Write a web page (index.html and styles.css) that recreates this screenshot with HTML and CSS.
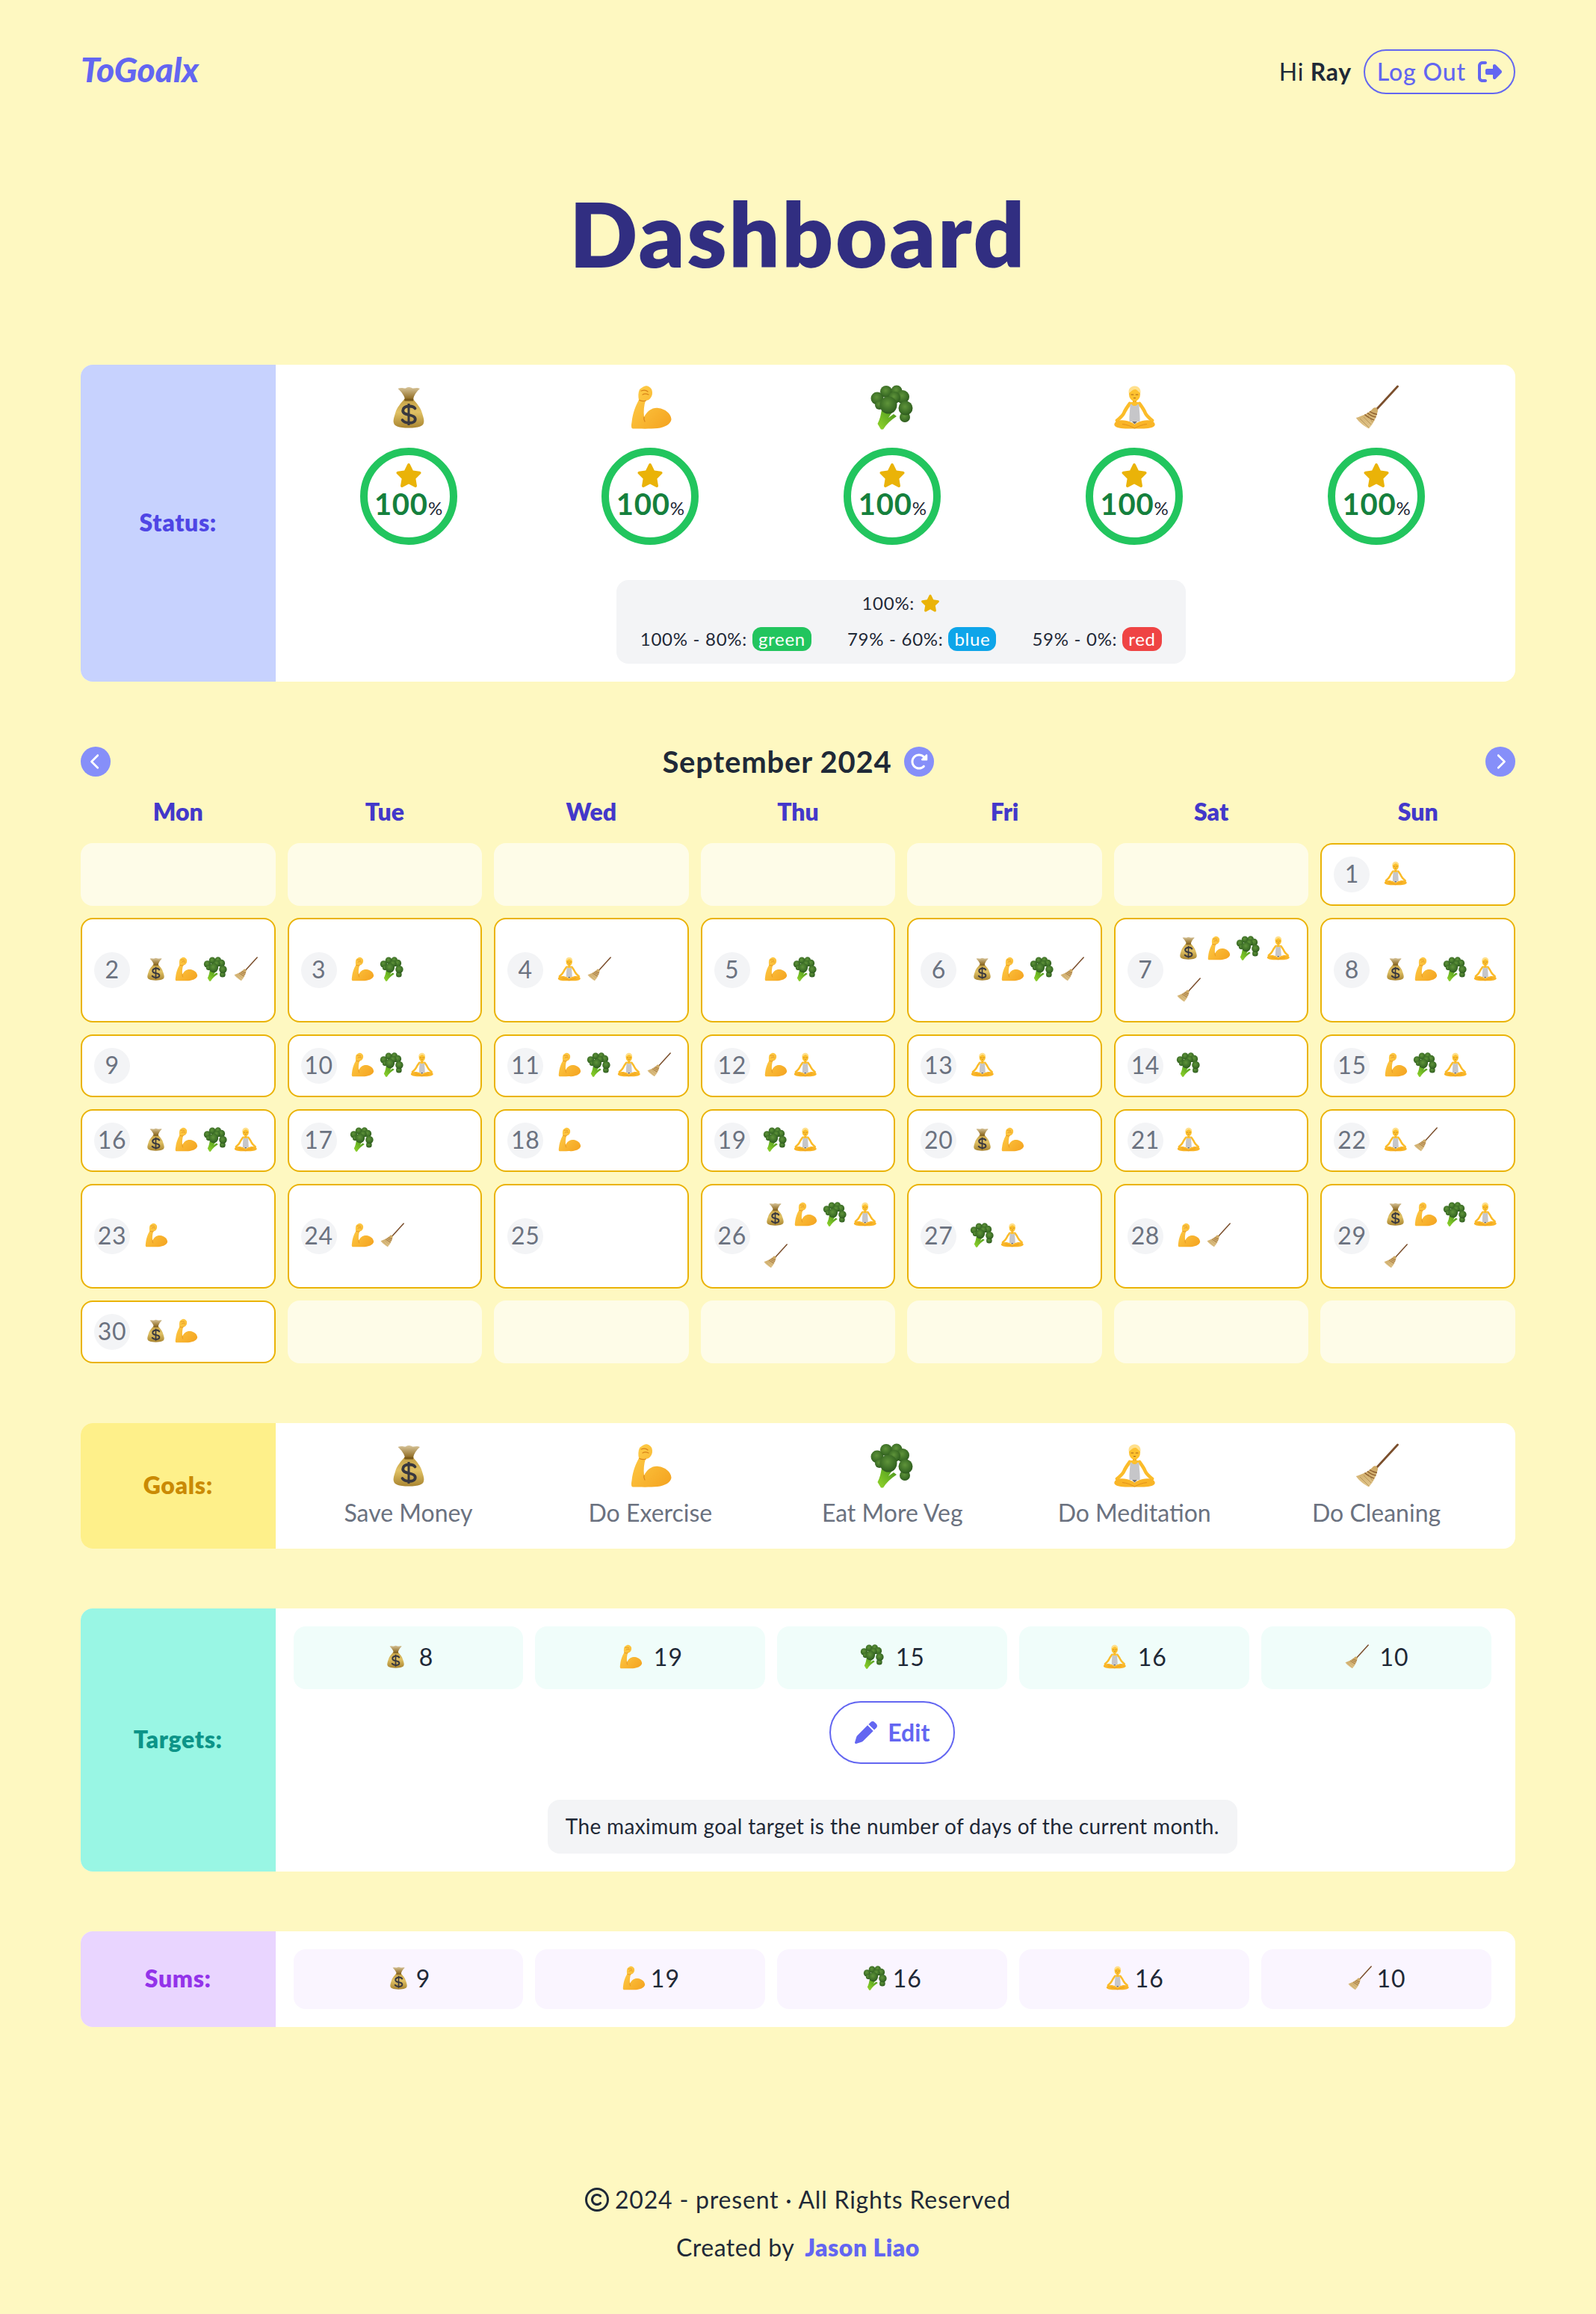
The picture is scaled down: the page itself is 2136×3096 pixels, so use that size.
FILE: index.html
```html
<!DOCTYPE html>
<html lang="en">
<head>
<meta charset="utf-8">
<title>ToGoalx Dashboard</title>
<link rel="stylesheet" href="styles.css">
</head>
<body>
<svg class="defs" width="0" height="0" aria-hidden="true">
  <defs>
    <linearGradient id="gBag" x1="0" y1="0" x2="0" y2="1"><stop offset="0" stop-color="#c39f45"/><stop offset=".45" stop-color="#e0c164"/><stop offset="1" stop-color="#a98531"/></linearGradient>
    <linearGradient id="gTop" x1="0" y1="0" x2="0" y2="1"><stop offset="0" stop-color="#d8c59a"/><stop offset="1" stop-color="#8f6b22"/></linearGradient>
    <linearGradient id="gArm" x1="0" y1="0" x2="1" y2="1"><stop offset="0" stop-color="#ffd04a"/><stop offset="1" stop-color="#f4a21f"/></linearGradient>
    <radialGradient id="gFl" cx=".45" cy=".4" r=".65"><stop offset="0" stop-color="#5f943a"/><stop offset=".7" stop-color="#3a6c25"/><stop offset="1" stop-color="#28521a"/></radialGradient>
    <linearGradient id="gStem" x1="0" y1="1" x2="1" y2="0"><stop offset="0" stop-color="#93d62c"/><stop offset="1" stop-color="#47941c"/></linearGradient>
    <linearGradient id="gBroom" x1="0" y1="0" x2="0" y2="1"><stop offset="0" stop-color="#cba661"/><stop offset="1" stop-color="#e2c68c"/></linearGradient>
    <symbol id="e-money" viewBox="0 0 60 60">
      <path d="M24 19C20 24 14 30 12 38 10 44 9 48 10 51 11 55 16 57.500 30 57.500S49 55 50 51C51 48 50 44 48 38 46 30 40 24 36 19Z" fill="url(#gBag)"/>
      <path d="M25 19C24 14 20 9 15.500 5 20 3 24 5 26 4.500 28 2.500 32 2.500 35 4.500 38 5 41 3 45 5 40 9 37 14 36 19Z" fill="url(#gTop)"/>
      <path d="M24 18.500H36.500L36 21.500H24.500Z" fill="#7a5a1c"/>
      <path d="M38.500 31.500C36 27.500 24 27 22.500 33 21 38 26 39 30 40 35 41 40 42.500 38.500 47.500 36.500 52 25 52 21.500 47" fill="none" stroke="#39383f" stroke-width="3.800" stroke-linecap="round"/>
      <path d="M30 25V54" stroke="#39383f" stroke-width="3"/>
    </symbol>
    <symbol id="e-muscle" viewBox="0 0 60 60">
      <path d="M22 2C26 0 31 3 32.500 7 33.500 11 33 14 31 17 29 20 26 21 24 21 22 27 21 35 22 43 26 35 33 30 41 31 50 32 58 38 58.500 46 58 52 50 57 40 58 30 59 16 58.500 7 58.500 5 58.500 4.500 55 5.500 50 7 36 11 28 15 20 14 16 14 10 16 6 18 4 20 3 22 2Z" fill="url(#gArm)"/>
      <path d="M16 20.500C19 22 22 22 24.500 21M22 43C21.500 45 22 47 23 49M18 8C21 7 25 7 27 9M20 13C23 11 26 12 28 13" fill="none" stroke="#d9841a" stroke-width="1.200" stroke-linecap="round"/>
    </symbol>
    <symbol id="e-broccoli" viewBox="0 0 60 60">
      <path d="M15 59.500L10.500 52C13.500 46 15 40 16 33L31 35 25 44 32 39 36 42C28 47 22 53 18 59.500Z" fill="url(#gStem)"/>
      <circle cx="47" cy="43" r="7" fill="url(#gFl)"/><circle cx="10" cy="18" r="8.500" fill="url(#gFl)"/>
      <circle cx="22" cy="9" r="8" fill="url(#gFl)"/><circle cx="36" cy="8" r="7.500" fill="url(#gFl)"/>
      <circle cx="13" cy="27" r="6" fill="url(#gFl)"/><circle cx="44" cy="16" r="9" fill="url(#gFl)"/>
      <circle cx="48" cy="31" r="9.500" fill="url(#gFl)"/><circle cx="33" cy="17" r="8" fill="url(#gFl)"/>
      <circle cx="25" cy="27" r="11.500" fill="url(#gFl)"/>
    </symbol>
    <symbol id="e-person" viewBox="0 0 60 60">
      <path d="M24 25C21 29 18 33 16 38 14 42 10 45 7 47.500M37 25C40 29 43 33 45 38 47 42 51 45 54 47.500" fill="none" stroke="#fbbc2a" stroke-width="4.600" stroke-linecap="round"/>
      <path d="M28 19H33V24H28Z" fill="#f2a91f"/>
      <path d="M24 23.500C26 22.500 35 22.500 37 23.500V28H24Z" fill="#fdc02e"/>
      <path d="M24.500 27C25 25.500 26.500 25.500 26.800 26 27.800 28.800 33.200 28.800 34.200 26 34.500 25.500 36 25.500 36.500 27 36.500 33 38 41 37.500 49H23.500C23 41 24.500 33 24.500 27Z" fill="#c6c6c9"/>
      <ellipse cx="30.500" cy="12" rx="7.600" ry="10" fill="#fdc22f"/>
      <path d="M22.700 11C21.500 4 27 1.500 30.500 1.500S39.500 4 38.300 11C35 9 34 6 31 6 28 6 26 9 22.700 11Z" fill="#ffe08c"/>
      <path d="M26 13H28.800M32.200 13H35M29.500 17.500H31.500" stroke="#a8621a" stroke-width="1" stroke-linecap="round"/>
      <path d="M3.500 52C5 47.500 13 46.500 20 48 25 49 29 51 30.500 53 32 51 36 49 41 48 48 46.500 56 47.500 57.500 52 59 56 52 58.500 43 58.500H18C9 58.500 2 56 3.500 52Z" fill="#f9b527"/>
      <path d="M14 52.500C20 53 26 55.500 30.500 58M47 52.500C41 53 35 55.500 30.500 58" fill="none" stroke="#e2901a" stroke-width="1"/>
      <path d="M27 49H34L30.500 52.500Z" fill="#6f6f75"/>
    </symbol>
    <symbol id="e-broom" viewBox="0 0 60 60">
      <path d="M58.500 2 30 33" stroke="#7b4f2d" stroke-width="2.800" stroke-linecap="round"/>
      <path d="M26 31C29 29 32 31 32 35 30 44 26 52 20 58.500 14 55.500 7 50 2.800 44 10 42 20 38 26 31Z" fill="url(#gBroom)"/>
      <path d="M18 37.500C21 40 25 42.500 29.500 43M14.500 39.500C18 43 22 45 27 47M21 35.500C24 37.500 27 38.800 31 39.500" fill="none" stroke="#8c5d2e" stroke-width="1.300"/>
      <path d="M8 45 20 57M13 43 23 53M19 41 25 50" fill="none" stroke="#b08e52" stroke-width=".8"/>
    </symbol>
    <symbol id="i-star" viewBox="0 0 576 512"><path d="M316.900 18C311.600 7 300.400 0 288.100 0s-23.400 7-28.800 18L195 150.300 51.400 171.500c-12 1.800-22 10.200-25.700 21.700s-.7 24.200 7.900 32.700L137.800 329 113.200 474.700c-2 12 3 24.200 12.900 31.300s23 8 33.800 2.300l128.300-68.500 128.300 68.500c10.800 5.700 23.900 4.900 33.800-2.300s14.900-19.300 12.900-31.300L438.500 329 542.700 225.900c8.600-8.500 11.700-21.200 7.900-32.700s-13.700-19.900-25.700-21.700L381.200 150.300 316.900 18z"/></symbol>
  </defs>
</svg>

<header class="topbar">
  <a class="logo">ToGoalx</a>
  <div class="user">
    <span class="greet">Hi <strong>Ray</strong></span>
    <button class="btn-outline logout">Log Out
      <svg class="ico-logout" viewBox="0 0 512 512"><path d="M377.900 105.900L500.700 228.700c7.200 7.200 11.300 17.100 11.300 27.300s-4.100 20.100-11.300 27.300L377.900 406.100c-6.400 6.400-15 9.900-24 9.900c-18.700 0-33.900-15.200-33.900-33.900l0-62.100-128 0c-17.700 0-32-14.300-32-32l0-64c0-17.700 14.300-32 32-32l128 0 0-62.100c0-18.700 15.200-33.900 33.900-33.900c9 0 17.600 3.600 24 9.900zM160 96L96 96c-17.700 0-32 14.300-32 32l0 256c0 17.700 14.300 32 32 32l64 0c17.700 0 32 14.300 32 32s-14.300 32-32 32l-64 0c-53 0-96-43-96-96L0 128C0 75 43 32 96 32l64 0c17.700 0 32 14.300 32 32s-14.300 32-32 32z"/></svg>
    </button>
  </div>
</header>

<h1 class="title">Dashboard</h1>

<section class="card">
  <div class="card-label label-status">Status:</div>
  <div class="card-body status-body">
    <div class="five">
      <div class="status-item"><svg class="emo-lg"><use href="#e-money"/></svg><div class="ring"><svg class="ring-star"><use href="#i-star"/></svg><div class="ring-val">100<small>%</small></div></div></div>
      <div class="status-item"><svg class="emo-lg"><use href="#e-muscle"/></svg><div class="ring"><svg class="ring-star"><use href="#i-star"/></svg><div class="ring-val">100<small>%</small></div></div></div>
      <div class="status-item"><svg class="emo-lg"><use href="#e-broccoli"/></svg><div class="ring"><svg class="ring-star"><use href="#i-star"/></svg><div class="ring-val">100<small>%</small></div></div></div>
      <div class="status-item"><svg class="emo-lg"><use href="#e-person"/></svg><div class="ring"><svg class="ring-star"><use href="#i-star"/></svg><div class="ring-val">100<small>%</small></div></div></div>
      <div class="status-item"><svg class="emo-lg"><use href="#e-broom"/></svg><div class="ring"><svg class="ring-star"><use href="#i-star"/></svg><div class="ring-val">100<small>%</small></div></div></div>
    </div>
    <div class="legend-wrap">
      <div class="legend">
        <div class="legend-top">100%: <svg class="legend-star"><use href="#i-star"/></svg></div>
        <div class="legend-row">
          <span>100% - 80%: <b class="tag tag-green">green</b></span>
          <span>79% - 60%: <b class="tag tag-blue">blue</b></span>
          <span>59% - 0%: <b class="tag tag-red">red</b></span>
        </div>
      </div>
    </div>
  </div>
</section>

<section class="calendar">
  <div class="cal-head">
    <button class="round"><svg class="chev" viewBox="0 0 320 512"><path d="M9.400 233.400c-12.500 12.500-12.500 32.800 0 45.300l192 192c12.500 12.500 32.800 12.500 45.300 0s12.500-32.800 0-45.300L77.300 256 246.600 86.600c12.500-12.500 12.500-32.800 0-45.300s-32.800-12.500-45.300 0l-192 192z"/></svg></button>
    <div class="cal-title"><span>September 2024</span><button class="round"><svg class="rot" viewBox="0 0 512 512"><path d="M463.500 224H472c13.300 0 24-10.700 24-24V72c0-9.700-5.800-18.500-14.800-22.200s-19.300-1.700-26.200 5.200L413.400 96.600c-87.600-86.500-228.700-86.200-315.800 1c-87.500 87.500-87.500 229.300 0 316.800s229.300 87.500 316.800 0c12.500-12.500 12.500-32.800 0-45.300s-32.800-12.500-45.300 0c-62.500 62.500-163.800 62.500-226.300 0s-62.500-163.800 0-226.300c62.200-62.200 162.700-62.500 225.300-1L327 183c-6.900 6.900-8.900 17.200-5.200 26.200s12.500 14.800 22.200 14.800H463.500z"/></svg></button></div>
    <button class="round"><svg class="chev" viewBox="0 0 320 512"><path d="M310.600 233.400c12.500 12.500 12.500 32.800 0 45.300l-192 192c-12.500 12.500-32.800 12.500-45.300 0s-12.500-32.800 0-45.300L242.700 256 73.400 86.600c-12.500-12.500-12.500-32.800 0-45.300s32.800-12.500 45.300 0l192 192z"/></svg></button>
  </div>
  <div class="weekdays"><div>Mon</div><div>Tue</div><div>Wed</div><div>Thu</div><div>Fri</div><div>Sat</div><div>Sun</div></div>
  <div class="month">
    <div class="empty"></div><div class="empty"></div><div class="empty"></div><div class="empty"></div><div class="empty"></div><div class="empty"></div>
    <div class="day"><span class="num">1</span><div class="emos"><svg class="emo"><use href="#e-person"/></svg></div></div>
    <div class="day"><span class="num">2</span><div class="emos"><svg class="emo"><use href="#e-money"/></svg><svg class="emo"><use href="#e-muscle"/></svg><svg class="emo"><use href="#e-broccoli"/></svg><svg class="emo"><use href="#e-broom"/></svg></div></div>
    <div class="day"><span class="num">3</span><div class="emos"><svg class="emo"><use href="#e-muscle"/></svg><svg class="emo"><use href="#e-broccoli"/></svg></div></div>
    <div class="day"><span class="num">4</span><div class="emos"><svg class="emo"><use href="#e-person"/></svg><svg class="emo"><use href="#e-broom"/></svg></div></div>
    <div class="day"><span class="num">5</span><div class="emos"><svg class="emo"><use href="#e-muscle"/></svg><svg class="emo"><use href="#e-broccoli"/></svg></div></div>
    <div class="day"><span class="num">6</span><div class="emos"><svg class="emo"><use href="#e-money"/></svg><svg class="emo"><use href="#e-muscle"/></svg><svg class="emo"><use href="#e-broccoli"/></svg><svg class="emo"><use href="#e-broom"/></svg></div></div>
    <div class="day"><span class="num">7</span><div class="emos"><svg class="emo"><use href="#e-money"/></svg><svg class="emo"><use href="#e-muscle"/></svg><svg class="emo"><use href="#e-broccoli"/></svg><svg class="emo"><use href="#e-person"/></svg><svg class="emo"><use href="#e-broom"/></svg></div></div>
    <div class="day"><span class="num">8</span><div class="emos"><svg class="emo"><use href="#e-money"/></svg><svg class="emo"><use href="#e-muscle"/></svg><svg class="emo"><use href="#e-broccoli"/></svg><svg class="emo"><use href="#e-person"/></svg></div></div>
    <div class="day"><span class="num">9</span><div class="emos"></div></div>
    <div class="day"><span class="num">10</span><div class="emos"><svg class="emo"><use href="#e-muscle"/></svg><svg class="emo"><use href="#e-broccoli"/></svg><svg class="emo"><use href="#e-person"/></svg></div></div>
    <div class="day"><span class="num">11</span><div class="emos"><svg class="emo"><use href="#e-muscle"/></svg><svg class="emo"><use href="#e-broccoli"/></svg><svg class="emo"><use href="#e-person"/></svg><svg class="emo"><use href="#e-broom"/></svg></div></div>
    <div class="day"><span class="num">12</span><div class="emos"><svg class="emo"><use href="#e-muscle"/></svg><svg class="emo"><use href="#e-person"/></svg></div></div>
    <div class="day"><span class="num">13</span><div class="emos"><svg class="emo"><use href="#e-person"/></svg></div></div>
    <div class="day"><span class="num">14</span><div class="emos"><svg class="emo"><use href="#e-broccoli"/></svg></div></div>
    <div class="day"><span class="num">15</span><div class="emos"><svg class="emo"><use href="#e-muscle"/></svg><svg class="emo"><use href="#e-broccoli"/></svg><svg class="emo"><use href="#e-person"/></svg></div></div>
    <div class="day"><span class="num">16</span><div class="emos"><svg class="emo"><use href="#e-money"/></svg><svg class="emo"><use href="#e-muscle"/></svg><svg class="emo"><use href="#e-broccoli"/></svg><svg class="emo"><use href="#e-person"/></svg></div></div>
    <div class="day"><span class="num">17</span><div class="emos"><svg class="emo"><use href="#e-broccoli"/></svg></div></div>
    <div class="day"><span class="num">18</span><div class="emos"><svg class="emo"><use href="#e-muscle"/></svg></div></div>
    <div class="day"><span class="num">19</span><div class="emos"><svg class="emo"><use href="#e-broccoli"/></svg><svg class="emo"><use href="#e-person"/></svg></div></div>
    <div class="day"><span class="num">20</span><div class="emos"><svg class="emo"><use href="#e-money"/></svg><svg class="emo"><use href="#e-muscle"/></svg></div></div>
    <div class="day"><span class="num">21</span><div class="emos"><svg class="emo"><use href="#e-person"/></svg></div></div>
    <div class="day"><span class="num">22</span><div class="emos"><svg class="emo"><use href="#e-person"/></svg><svg class="emo"><use href="#e-broom"/></svg></div></div>
    <div class="day"><span class="num">23</span><div class="emos"><svg class="emo"><use href="#e-muscle"/></svg></div></div>
    <div class="day"><span class="num">24</span><div class="emos"><svg class="emo"><use href="#e-muscle"/></svg><svg class="emo"><use href="#e-broom"/></svg></div></div>
    <div class="day"><span class="num">25</span><div class="emos"></div></div>
    <div class="day"><span class="num">26</span><div class="emos"><svg class="emo"><use href="#e-money"/></svg><svg class="emo"><use href="#e-muscle"/></svg><svg class="emo"><use href="#e-broccoli"/></svg><svg class="emo"><use href="#e-person"/></svg><svg class="emo"><use href="#e-broom"/></svg></div></div>
    <div class="day"><span class="num">27</span><div class="emos"><svg class="emo"><use href="#e-broccoli"/></svg><svg class="emo"><use href="#e-person"/></svg></div></div>
    <div class="day"><span class="num">28</span><div class="emos"><svg class="emo"><use href="#e-muscle"/></svg><svg class="emo"><use href="#e-broom"/></svg></div></div>
    <div class="day"><span class="num">29</span><div class="emos"><svg class="emo"><use href="#e-money"/></svg><svg class="emo"><use href="#e-muscle"/></svg><svg class="emo"><use href="#e-broccoli"/></svg><svg class="emo"><use href="#e-person"/></svg><svg class="emo"><use href="#e-broom"/></svg></div></div>
    <div class="day"><span class="num">30</span><div class="emos"><svg class="emo"><use href="#e-money"/></svg><svg class="emo"><use href="#e-muscle"/></svg></div></div>
    <div class="empty"></div><div class="empty"></div><div class="empty"></div><div class="empty"></div><div class="empty"></div><div class="empty"></div>
  </div>
</section>

<section class="card card-gap">
  <div class="card-label label-goals">Goals:</div>
  <div class="card-body goals-body">
    <div class="five">
      <div class="goal"><svg class="emo-lg"><use href="#e-money"/></svg><span>Save Money</span></div>
      <div class="goal"><svg class="emo-lg"><use href="#e-muscle"/></svg><span>Do Exercise</span></div>
      <div class="goal"><svg class="emo-lg"><use href="#e-broccoli"/></svg><span>Eat More Veg</span></div>
      <div class="goal"><svg class="emo-lg"><use href="#e-person"/></svg><span>Do Meditation</span></div>
      <div class="goal"><svg class="emo-lg"><use href="#e-broom"/></svg><span>Do Cleaning</span></div>
    </div>
  </div>
</section>

<section class="card card-gap">
  <div class="card-label label-targets">Targets:</div>
  <div class="card-body">
    <div class="five">
      <div class="target"><svg class="emo"><use href="#e-money"/></svg><span>8</span></div>
      <div class="target"><svg class="emo"><use href="#e-muscle"/></svg><span>19</span></div>
      <div class="target"><svg class="emo"><use href="#e-broccoli"/></svg><span>15</span></div>
      <div class="target"><svg class="emo"><use href="#e-person"/></svg><span>16</span></div>
      <div class="target"><svg class="emo"><use href="#e-broom"/></svg><span>10</span></div>
    </div>
    <div class="center-col">
      <button class="btn-outline edit"><svg class="ico-pen" viewBox="0 0 512 512"><path d="M362.700 19.300L314.300 67.700 444.300 197.700l48.400-48.400c25-25 25-65.500 0-90.500L453.300 19.300c-25-25-65.500-25-90.500 0zm-71 71L58.600 323.500c-10.400 10.400-18 23.300-22.200 37.400L1 481.200C-1.500 489.700 .8 498.800 7 505s15.300 8.500 23.700 6.100l120.300-35.400c14.100-4.200 27-11.800 37.400-22.200L421.700 220.300 291.700 90.300z"/></svg>Edit</button>
      <p class="note">The maximum goal target is the number of days of the current month.</p>
    </div>
  </div>
</section>

<section class="card card-gap">
  <div class="card-label label-sums">Sums:</div>
  <div class="card-body">
    <div class="five">
      <div class="sum"><svg class="emo"><use href="#e-money"/></svg><span>9</span></div>
      <div class="sum"><svg class="emo"><use href="#e-muscle"/></svg><span>19</span></div>
      <div class="sum"><svg class="emo"><use href="#e-broccoli"/></svg><span>16</span></div>
      <div class="sum"><svg class="emo"><use href="#e-person"/></svg><span>16</span></div>
      <div class="sum"><svg class="emo"><use href="#e-broom"/></svg><span>10</span></div>
    </div>
  </div>
</section>

<footer class="foot">
  <p class="foot-line foot-copy"><svg class="ico-copy" viewBox="0 0 512 512"><path d="M256 48a208 208 0 1 1 0 416 208 208 0 1 1 0-416zm0 464A256 256 0 1 0 256 0a256 256 0 1 0 0 512zM199.400 312.600c-31.200-31.200-31.200-81.900 0-113.100s81.900-31.200 113.100 0c9.400 9.400 24.600 9.400 33.900 0s9.400-24.600 0-33.900c-50-50-131-50-181 0s-50 131 0 181s131 50 181 0c9.400-9.400 9.400-24.600 0-33.900s-24.600-9.400-33.900 0c-31.200 31.200-81.900 31.200-113.100 0z"/></svg><span>2024 - present · All Rights Reserved</span></p>
  <p class="foot-line foot-by"><span>Created by</span> <a class="author">Jason Liao</a></p>
</footer>
</body>
</html>
```

FILE: styles.css
```css
* { box-sizing: border-box; }
html, body { margin: 0; }
body {
  padding: 66px 108px 64px;
  background: #fef8c1;
  color: #1f2937;
  font-family: "Lato", "Noto Sans", sans-serif;
  font-size: 32px;
  line-height: 48px;
}
.defs { position: absolute; }
button { font: inherit; background: none; cursor: pointer; padding: 0; }

.topbar { display: flex; justify-content: space-between; align-items: center; height: 60px; }
.logo { color: #6366f1; font-size: 46px; font-weight: 900; font-style: italic; line-height: 60px; margin-bottom: 6px; }
.user { display: flex; align-items: center; gap: 16px; }
.greet { letter-spacing: .02em; }
.btn-outline { display: flex; align-items: center; color: #6366f1; border: 2px solid #6366f1; }
.logout { height: 60px; padding: 0 16px; border-radius: 30px; gap: 16px; letter-spacing: .027em; font-weight: 500; }
.ico-logout { width: 32px; height: 32px; fill: #6366f1; }

.title { margin: 126px 0 116px; text-align: center; color: #312e81; font-size: 120px; line-height: 120px; font-weight: 800; letter-spacing: .022em; }

.card { display: flex; background: #fff; border-radius: 16px; overflow: hidden; }
.card-gap { margin-top: 80px; }
.card-label { flex: 0 0 260.57px; display: flex; align-items: center; justify-content: center; font-weight: 800; letter-spacing: .02em; padding-bottom: 3px; }
.label-status { background: #c7d2fe; color: #4f46e5; }
.label-goals { background: #fef08a; color: #ca8a04; }
.label-targets { background: #99f6e4; color: #0d9488; }
.label-sums { background: #e9d5ff; color: #9333ea; }
.card-body { flex: 1; min-width: 0; padding: 24px 32px 24px 24px; }
.five { display: grid; grid-template-columns: repeat(5, 1fr); gap: 16px; }

.status-body { padding-top: 27px; }
.status-item { display: flex; flex-direction: column; align-items: center; gap: 24px; }
.emo-lg { display: block; width: 60px; height: 60px; }
.ring { width: 130px; height: 130px; border: 10px solid #22c55e; border-radius: 50%; display: flex; flex-direction: column; align-items: center; }
.ring-star { width: 36px; height: 32px; margin-top: 11px; fill: #eab308; display: block; }
.ring-val { color: #15803d; font-size: 40px; line-height: 44px; font-weight: 700; margin-top: 0; white-space: nowrap; letter-spacing: .02em; }
.ring-val small { color: #1f2937; font-size: 24px; font-weight: 400; letter-spacing: 0; }

.legend-wrap { display: flex; justify-content: center; margin-top: 47px; padding-left: 23px; }
.legend { height: 112px; padding: 13px 32px 0; background: #f3f4f6; border-radius: 16px; font-size: 24px; line-height: 32px; letter-spacing: .03em; }
.legend-top { display: flex; align-items: center; justify-content: center; gap: 8px; height: 36px; }
.legend-star { width: 26px; height: 24px; fill: #eab308; }
.legend-row { display: flex; gap: 48px; margin-top: 14px; white-space: nowrap; }
.tag { display: inline-block; color: #fff; font-weight: 400; border-radius: 12px; padding: 0 8px; height: 32px; }
.tag-green { background: #22c55e; }
.tag-blue { background: #0ea5e9; }
.tag-red { background: #ef4444; }

.calendar { margin-top: 87px; }
.cal-head { display: flex; justify-content: space-between; align-items: center; height: 40px; }
.cal-title { display: flex; align-items: center; gap: 16px; font-size: 40px; font-weight: 700; letter-spacing: .02em; }
.round { width: 40px; height: 40px; border: 0; border-radius: 50%; background: #868ff9; display: flex; align-items: center; justify-content: center; }
.chev { width: 14px; height: 22px; fill: #fff; }
.rot { width: 24px; height: 24px; fill: #fff; }
.weekdays { display: grid; grid-template-columns: repeat(7, 1fr); gap: 16px; margin-top: 27px; color: #4338ca; font-weight: 800; line-height: 40px; text-align: center; }
.month { display: grid; grid-template-columns: repeat(7, 1fr); gap: 16px; margin-top: 22px; }
.empty { min-height: 84px; background: #fefce8; border-radius: 16px; }
.day { display: flex; align-items: center; min-height: 84px; padding: 12px 16px; background: #fff; border: 2px solid #eab308; border-radius: 16px; }
.num { flex: none; width: 48px; height: 48px; border-radius: 50%; background: #f3f4f6; color: #6b7280; text-align: center; line-height: 46px; letter-spacing: .02em; }
.emos { display: flex; flex-wrap: wrap; margin-left: 14px; min-width: 0; flex: 1; }
.emos .emo { margin: 9.500px 3.500px 13.500px; }
.emo { display: block; flex: none; width: 33px; height: 33px; }

.goals-body { padding-top: 27px; }
.goal { display: flex; flex-direction: column; align-items: center; gap: 9px; color: #6b7280; }

.target, .sum { display: flex; align-items: center; justify-content: center; border-radius: 16px; padding-bottom: 3px; }
.target { height: 84px; gap: 15px; background: #f0fdfa; letter-spacing: .03em; }
.sum { height: 80px; gap: 7px; background: #faf5ff; letter-spacing: .03em; }

.center-col { display: flex; flex-direction: column; align-items: center; margin-top: 16px; }
.edit { height: 84px; width: 168px; justify-content: center; gap: 14px; border-radius: 42px; font-weight: 700; }
.ico-pen { width: 30px; height: 30px; fill: #6366f1; }
.note { margin: 48px 0 0; height: 72px; padding: 0 24px; background: #f3f4f6; border-radius: 16px; font-size: 28px; line-height: 70px; white-space: nowrap; letter-spacing: .013em; }

.foot { margin-top: 207px; text-align: center; }
.foot-line { margin: 0; display: flex; align-items: center; justify-content: center; height: 48px; gap: 8px; letter-spacing: .025em; }
.foot-by { margin-top: 16px; gap: 14px; letter-spacing: .015em; }
.ico-copy { width: 32px; height: 32px; fill: #1f2937; }
.author { color: #6366f1; font-weight: 800; }
```
